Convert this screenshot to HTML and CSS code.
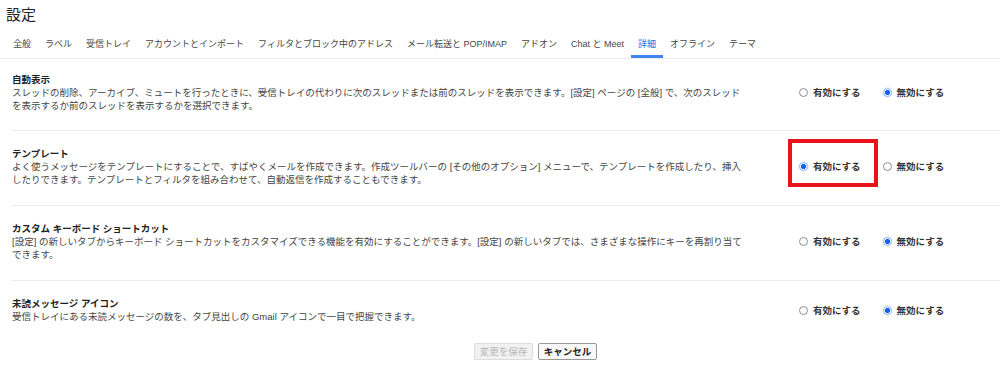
FILE: index.html
```html
<!DOCTYPE html>
<html lang="ja">
<head>
<meta charset="utf-8">
<title>設定</title>
<link rel="stylesheet" href="styles.css">
</head>
<body>
<header class="header">
  <h1 class="page-title">設定</h1>
  <nav class="tabs">
    <span class="tab">全般</span>
    <span class="tab">ラベル</span>
    <span class="tab">受信トレイ</span>
    <span class="tab">アカウントとインポート</span>
    <span class="tab">フィルタとブロック中のアドレス</span>
    <span class="tab">メール転送と POP/IMAP</span>
    <span class="tab">アドオン</span>
    <span class="tab">Chat と Meet</span>
    <span class="tab tab-active">詳細</span>
    <span class="tab">オフライン</span>
    <span class="tab">テーマ</span>
  </nav>
</header>
<main class="settings">
  <section class="row">
    <div class="info">
      <div class="row-title">自動表示</div>
      <div class="row-desc">スレッドの削除、アーカイブ、ミュートを行ったときに、受信トレイの代わりに次のスレッドまたは前のスレッドを表示できます。[設定] ページの [全般] で、次のスレッドを表示するか前のスレッドを表示するかを選択できます。</div>
    </div>
    <div class="options">
      <label class="option"><span class="radio"></span>有効にする</label>
      <label class="option"><span class="radio checked"></span>無効にする</label>
    </div>
  </section>
  <section class="row">
    <div class="info">
      <div class="row-title">テンプレート</div>
      <div class="row-desc">よく使うメッセージをテンプレートにすることで、すばやくメールを作成できます。作成ツールバーの [その他のオプション] メニューで、テンプレートを作成したり、挿入したりできます。テンプレートとフィルタを組み合わせて、自動返信を作成することもできます。</div>
    </div>
    <div class="options">
      <label class="option highlighted"><span class="radio checked"></span>有効にする</label>
      <label class="option"><span class="radio"></span>無効にする</label>
    </div>
  </section>
  <section class="row">
    <div class="info">
      <div class="row-title">カスタム キーボード ショートカット</div>
      <div class="row-desc">[設定] の新しいタブからキーボード ショートカットをカスタマイズできる機能を有効にすることができます。[設定] の新しいタブでは、さまざまな操作にキーを再割り当てできます。</div>
    </div>
    <div class="options">
      <label class="option"><span class="radio"></span>有効にする</label>
      <label class="option"><span class="radio checked"></span>無効にする</label>
    </div>
  </section>
  <section class="row row-last">
    <div class="info">
      <div class="row-title">未読メッセージ アイコン</div>
      <div class="row-desc">受信トレイにある未読メッセージの数を、タブ見出しの Gmail アイコンで一目で把握できます。</div>
    </div>
    <div class="options">
      <label class="option"><span class="radio"></span>有効にする</label>
      <label class="option"><span class="radio checked"></span>無効にする</label>
    </div>
  </section>
  <div class="actions">
    <button class="btn btn-disabled" disabled>変更を保存</button>
    <button class="btn">キャンセル</button>
  </div>
</main>
</body>
</html>
```
FILE: styles.css
```css
* { box-sizing: border-box; }

body {
  margin: 0;
  background: #fff;
  font-family: "Liberation Sans", "Noto Sans CJK JP", sans-serif;
  color: #222;
  width: 1000px;
  height: 386px;
  overflow: hidden;
}

.header {
  padding: 5px 0 0 0;
  border-bottom: 1px solid #ebebeb;
}

.page-title {
  margin: 0 0 0 6px;
  font-size: 15px;
  line-height: 20px;
  font-weight: 400;
  color: #222;
}

.tabs {
  display: flex;
  margin-top: 6px;
  padding-left: 6px;
}

.tab {
  padding: 7px 7px 4px;
  font-size: 9px;
  line-height: 13px;
  color: #444;
  border-bottom: 3px solid transparent;
  white-space: nowrap;
}

.tab-active {
  color: #1a73e8;
  border-bottom-color: #4285f4;
}

.settings {
  display: flex;
  flex-direction: column;
}

.row {
  display: flex;
  align-items: center;
  margin-left: 12px;
  padding: 16px 0 19px;
  border-bottom: 1px solid #ebebeb;
}

.row:first-child {
  padding: 14px 0 18px;
}

.row-last {
  border-bottom: none;
}

.info {
  width: 735px;
  font-size: 9.5px;
  line-height: 13px;
}

.row-title {
  font-weight: 700;
  color: #202124;
}

.row-desc {
  color: #444;
}

.options {
  display: flex;
  align-items: center;
  margin-left: 52px;
  gap: 22px;
}

.option {
  position: relative;
  display: flex;
  align-items: center;
  gap: 5px;
  font-size: 9.5px;
  line-height: 13px;
  font-weight: 700;
  color: #333;
  white-space: nowrap;
}

.radio {
  width: 9px;
  height: 9px;
  border-radius: 50%;
  border: 1px solid #8d8d8d;
  background: #fff;
  flex: none;
}

.radio.checked {
  border-color: #8bb5f7;
  background: radial-gradient(circle, #0f63ee 0 2.3px, #fff 2.8px);
  box-shadow: 0 0 0 0.5px #cfe0fc;
}

.highlighted::after {
  content: "";
  position: absolute;
  left: -11px;
  right: -17px;
  top: -21px;
  bottom: -14px;
  border: 4px solid #e8131b;
}

.actions {
  display: flex;
  gap: 5px;
  margin-top: 1px;
  padding-left: 474px;
}

.btn {
  height: 17px;
  width: 59px;
  padding: 0;
  font-family: "Liberation Sans", "Noto Sans CJK JP", sans-serif;
  font-size: 9.5px;
  line-height: 15px;
  border: 1px solid #999;
  border-radius: 2px;
  background: #f8f8f8;
  color: #222;
  font-weight: 700;
}

.btn-disabled {
  background: #f1f1f1;
  border-color: #dcdcdc;
  color: #b5b5b5;
  font-weight: 400;
}
```
